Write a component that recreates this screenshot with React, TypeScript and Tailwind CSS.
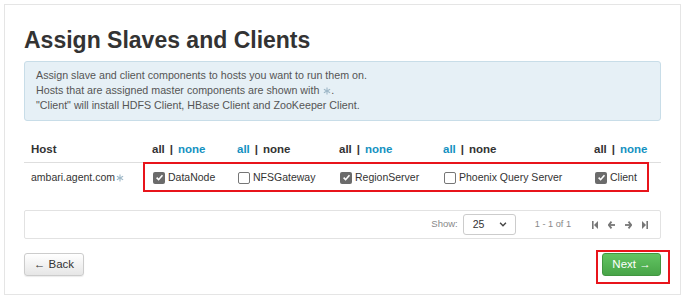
import React from "react";

const Check = ({ checked }: { checked: boolean }) =>
  checked ? (
    <span className="inline-flex w-[12px] h-[12px] rounded-[2px] bg-[#6b6b6b] items-center justify-center mr-[3px]">
      <svg width="9" height="9" viewBox="0 0 10 10">
        <path d="M1.8 5.2 L4 7.4 L8.3 2.4" stroke="#fff" strokeWidth="1.8" fill="none" />
      </svg>
    </span>
  ) : (
    <span className="inline-block w-[12px] h-[12px] rounded-[2px] border border-[#767676] bg-white mr-[3px]" />
  );

const Snow = () => (
  <svg width="8" height="8" viewBox="0 0 10 10" className="inline-block ml-[1px]">
    <g stroke="#9fb8c8" strokeWidth="1.4">
      <line x1="5" y1="0.5" x2="5" y2="9.5" />
      <line x1="1.1" y1="2.75" x2="8.9" y2="7.25" />
      <line x1="1.1" y1="7.25" x2="8.9" y2="2.75" />
    </g>
  </svg>
);

const AllNone = ({ allLink }: { allLink: boolean }) => (
  <span className="font-bold text-[11.5px]">
    <span className={allLink ? "text-[#1491c1]" : "text-[#333]"}>all</span>
    <span className="text-[#333] mx-[5px]">|</span>
    <span className={allLink ? "text-[#333]" : "text-[#1491c1]"}>none</span>
  </span>
);

const cols = [
  { w: "w-[85px]", label: "DataNode", checked: true, allLink: false },
  { w: "w-[102px]", label: "NFSGateway", checked: false, allLink: true },
  { w: "w-[104px]", label: "RegionServer", checked: true, allLink: false },
  { w: "w-[151px]", label: "Phoenix Query Server", checked: false, allLink: true },
  { w: "flex-1", label: "Client", checked: true, allLink: false },
];

export default function App() {
  return (
    <div
      className="w-[698px] h-[304px] bg-white pt-[4px] pl-[4px] relative"
      style={{ fontFamily: '"Liberation Sans", Arial, sans-serif' }}
    >
      <div className="w-[677px] h-[291px] border border-[#e5e5e5] px-[19px]">
        <h2 className="text-[23px] font-bold leading-[28px] pt-[21px] text-[#333]">
          Assign Slaves and Clients
        </h2>
        <div className="mt-[7px] h-[60px] border border-[#c8dde8] rounded-[3px] bg-[#e6f0f6] px-[11px] pt-[6px] text-[10.7px] leading-[15px] text-[#555]">
          <div>Assign slave and client components to hosts you want to run them on.</div>
          <div>
            Hosts that are assigned master components are shown with <Snow />.
          </div>
          <div>"Client" will install HDFS Client, HBase Client and ZooKeeper Client.</div>
        </div>

        <div className="mt-[17px] text-[10.5px] text-[#333]">
          <div className="flex h-[25px] items-center border-b border-[#dedede]">
            <div className="w-[120px] pl-[7px] font-bold text-[11.5px]">Host</div>
            {cols.map((c) => (
              <div key={c.label} className={`${c.w} pl-[8px]`}>
                <AllNone allLink={c.allLink} />
              </div>
            ))}
          </div>
          <div className="flex h-[29px] items-center">
            <div className="w-[120px] pl-[7px] flex items-center">
              ambari.agent.com
              <Snow />
            </div>
            {cols.map((c) => (
              <div key={c.label} className={`${c.w} pl-[9px] flex items-center`}>
                <Check checked={c.checked} />
                {c.label}
              </div>
            ))}
          </div>
        </div>

        <div className="mt-[18px] h-[29px] border border-[#e2e2e2] rounded-[2px] flex items-center justify-end pr-[12px] text-[9.5px] text-[#888]">
          <span className="mr-[5px]">Show:</span>
          <div className="w-[53px] h-[21px] border border-[#ccc] rounded-[3px] flex items-center justify-between pl-[9px] pr-[8px] text-[10.5px] text-[#333]">
            <span>25</span>
            <svg width="8" height="5" viewBox="0 0 9 6">
              <path d="M1 1 L4.5 4.5 L8 1" stroke="#444" strokeWidth="1.7" fill="none" />
            </svg>
          </div>
          <span className="ml-[19px] mr-[21px] text-[9.2px]">1 - 1 of 1</span>
          <div className="flex items-center gap-[10px]">
            <svg width="6" height="8" viewBox="0 0 6 8">
              <rect x="0" y="0" width="1.6" height="8" fill="#777" />
              <path d="M6 0 L2 4 L6 8 Z" fill="#777" />
            </svg>
            <svg width="7" height="8" viewBox="0 0 7 8">
              <path d="M3.5 0.6 L0.8 4 L3.5 7.4" stroke="#777" strokeWidth="1.8" fill="none" />
              <line x1="1" y1="4" x2="7" y2="4" stroke="#777" strokeWidth="1.8" />
            </svg>
            <svg width="7" height="8" viewBox="0 0 7 8">
              <path d="M3.5 0.6 L6.2 4 L3.5 7.4" stroke="#777" strokeWidth="1.8" fill="none" />
              <line x1="0" y1="4" x2="6" y2="4" stroke="#777" strokeWidth="1.8" />
            </svg>
            <svg width="6" height="8" viewBox="0 0 6 8">
              <path d="M0 0 L4 4 L0 8 Z" fill="#777" />
              <rect x="4.4" y="0" width="1.6" height="8" fill="#777" />
            </svg>
          </div>
        </div>

        <div className="mt-[14px] flex justify-between">
          <button className="w-[60px] h-[23px] rounded-[3px] border border-[#ccc] bg-gradient-to-b from-white to-[#e6e6e6] shadow-[0_1px_1px_rgba(0,0,0,0.08)] text-[11.5px] text-[#333] flex items-center justify-center">
            ← Back
          </button>
          <button className="w-[59px] h-[23px] rounded-[3px] border border-[#419641] bg-gradient-to-b from-[#62c462] to-[#48a548] text-[11.5px] text-white flex items-center justify-center">
            Next →
          </button>
        </div>
      </div>

      <div className="absolute left-[143px] top-[162px] w-[506px] h-[30px] border-2 border-[#e8141b] pointer-events-none" />
      <div className="absolute left-[596px] top-[250px] w-[74px] h-[34px] border-2 border-[#e8141b] pointer-events-none" />
    </div>
  );
}
